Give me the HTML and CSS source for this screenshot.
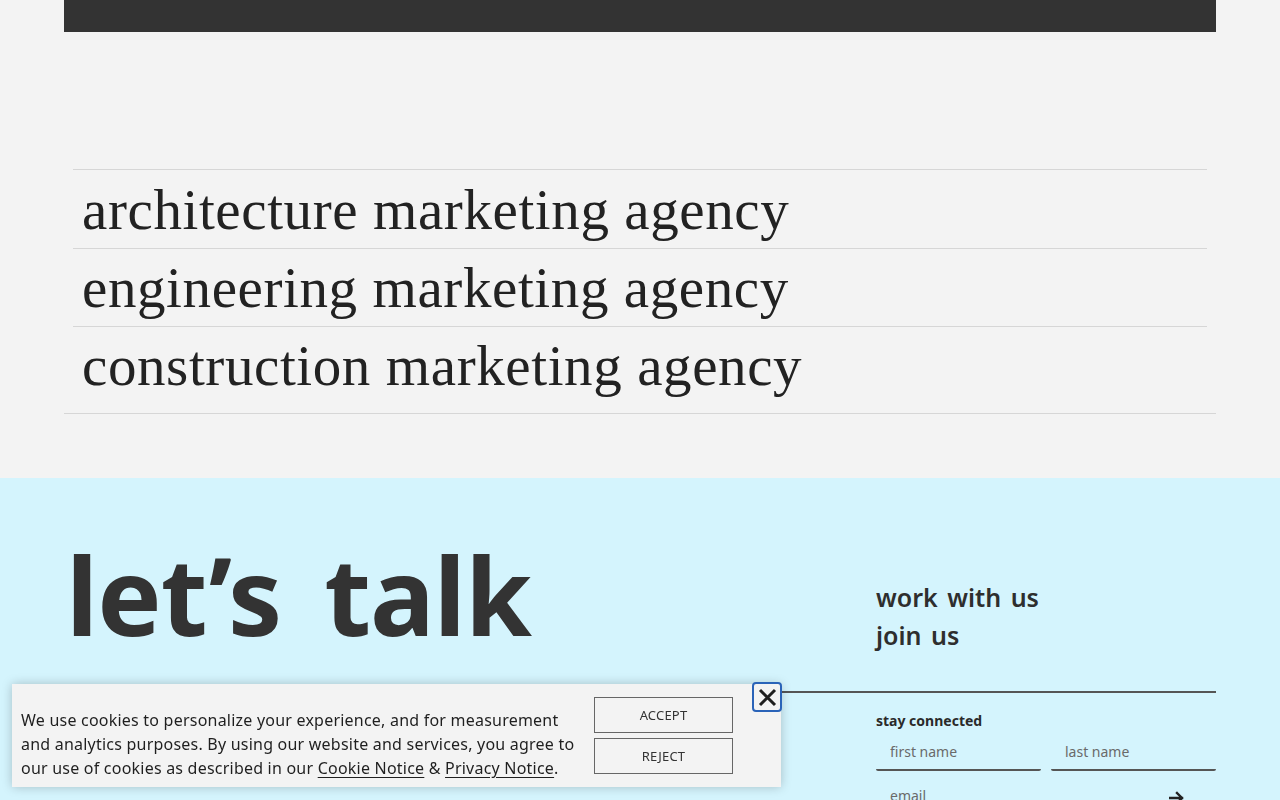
FILE: index.html
```html
<!DOCTYPE html>
<html lang="en">
<head>
<meta charset="utf-8">
<title>let's talk</title>
<link rel="stylesheet" href="styles.css">
</head>
<body>
<div class="wrap">
  <div class="topbar"></div>
</div>
<section class="services">
  <div class="wrap services-wrap">
    <ul class="service-list">
      <li class="service">architecture marketing agency</li>
      <li class="service">engineering marketing agency</li>
      <li class="service">construction marketing agency</li>
    </ul>
  </div>
</section>
<section class="talk">
  <div class="wrap talk-wrap">
    <div class="talk-left">
      <h2 class="talk-title">let’s talk</h2>
    </div>
    <div class="talk-right">
      <ul class="talk-links">
        <li>work with us</li>
        <li>join us</li>
      </ul>
    </div>
  </div>
  <div class="wrap form-wrap">
    <div class="form-col">
      <div class="form-rule"></div>
      <form class="newsletter">
        <div class="nl-title">stay connected</div>
        <div class="nl-row">
          <input class="nl-input" type="text" placeholder="first name">
          <input class="nl-input" type="text" placeholder="last name">
        </div>
        <div class="nl-row nl-email">
          <input class="nl-input" type="email" placeholder="email">
          <span class="nl-arrow">
            <svg width="16" height="14" viewBox="0 0 16 14"><path d="M1 7h12M8 2l5 5-5 5" fill="none" stroke="#222" stroke-width="2.4" stroke-linecap="square"/></svg>
          </span>
        </div>
      </form>
    </div>
  </div>
</section>
<div class="cookie">
  <p class="cookie-text">We use cookies to personalize your experience, and for measurement<br>and analytics purposes. By using our website and services, you agree to<br>our use of cookies as described in our <a href="#">Cookie Notice</a> &amp; <a href="#">Privacy Notice</a>.</p>
  <div class="cookie-btns">
    <button class="cbtn" type="button">ACCEPT</button>
    <button class="cbtn" type="button">REJECT</button>
  </div>
  <button class="cookie-close" type="button" aria-label="close">
    <svg width="21" height="21" viewBox="0 0 21 21"><path d="M3 3L18 18M18 3L3 18" stroke="#1e1e1e" stroke-width="3" fill="none"/></svg>
  </button>
</div>
</body>
</html>
```
FILE: styles.css
```css
* { box-sizing: border-box; }
html, body { margin: 0; padding: 0; }
body {
  background: #f3f3f3;
  font-family: "Noto Sans", "Liberation Sans", sans-serif;
  color: #333;
  overflow: hidden;
  height: 800px;
}
.wrap { width: 1152px; margin: 0 auto; }
.topbar { height: 32px; background: #333; }

.services { padding-top: 137px; padding-bottom: 64px; }
.services-wrap { border-bottom: 1px solid #d6d6d6; padding: 0 9px 9px; }
.service-list { list-style: none; margin: 0; padding: 0; }
.service {
  border-top: 1px solid #d6d6d6;
  height: 78px;
  padding-left: 9px;
  font-family: "Liberation Serif", "DejaVu Serif", serif;
  font-size: 57px;
  line-height: 78px;
  color: #222;
  letter-spacing: 0.6px;
}
.service:first-child { height: 79px; line-height: 80px; }

.talk { background: #d4f4fd; padding-top: 57px; height: 400px; }
.talk-wrap { display: flex; justify-content: space-between; }
.talk-title {
  margin: 0;
  font-size: 108px;
  font-weight: 700;
  line-height: 120px;
  letter-spacing: -1px;
  word-spacing: 16px;
  color: #333;
  padding-left: 2px;
}
.talk-right { width: 340px; padding-top: 43px; }
.talk-links { list-style: none; margin: 0; padding: 0; }
.talk-links li {
  font-size: 25px;
  font-weight: 600;
  line-height: 38px;
  color: #2e2e2e;
  word-spacing: 3px;
}
.form-wrap { display: flex; justify-content: flex-end; margin-top: 34px; }
.form-col { width: 456px; }
.form-rule { height: 2px; background: #555; margin-top: 2px; }
.newsletter { margin-left: 116px; padding-top: 19px; }
.nl-title { font-size: 14px; font-weight: 700; color: #2a2a2a; line-height: 18px; margin-bottom: 7px; }
.nl-row { display: flex; gap: 10px; }
.nl-input {
  flex: 1;
  min-width: 0;
  border: 0;
  border-bottom: 2px solid #555;
  border-radius: 0 0 2px 2px;
  background: transparent;
  font-family: "Noto Sans", sans-serif;
  font-size: 14px;
  padding: 4px 14px 8px;
  height: 34px;
  color: #333;
  outline: none;
}
.nl-input::placeholder { color: #6a6a6a; }
.nl-email { position: relative; margin-top: 10px; }
.nl-email .nl-input { border-bottom-color: transparent; }
.nl-arrow { position: absolute; right: 31px; top: 7px; }

.cookie {
  position: fixed;
  left: 12px;
  bottom: 13px;
  width: 769px;
  height: 103px;
  background: #f3f3f3;
  box-shadow: 0 0 10px rgba(0, 0, 0, 0.22);
  display: flex;
  align-items: flex-start;
  padding: 24px 0 0 9px;
}
.cookie-text {
  margin: 0;
  width: 565px;
  font-size: 16px;
  line-height: 24px;
  color: #1f1f1f;
  letter-spacing: 0.22px;
  white-space: nowrap;
}
.cookie-text a { color: #1f1f1f; text-decoration: underline; text-underline-offset: 3px; }
.cookie-btns {
  display: flex;
  flex-direction: column;
  gap: 5px;
  margin-left: 8px;
  margin-top: -11px;
}
.cbtn {
  width: 139px;
  height: 36px;
  border: 1.5px solid #666;
  background: #f3f3f3;
  font-family: "Noto Sans", sans-serif;
  font-size: 13px;
  color: #333;
  letter-spacing: 0.2px;
  padding: 0;
}
.cookie-close {
  position: absolute;
  right: -1px;
  top: -2px;
  width: 30px;
  height: 30px;
  border: 2px solid #2a63b8;
  border-radius: 4px;
  background: #f3f3f3;
  padding: 0;
  display: flex;
  align-items: center;
  justify-content: center;
}
```
